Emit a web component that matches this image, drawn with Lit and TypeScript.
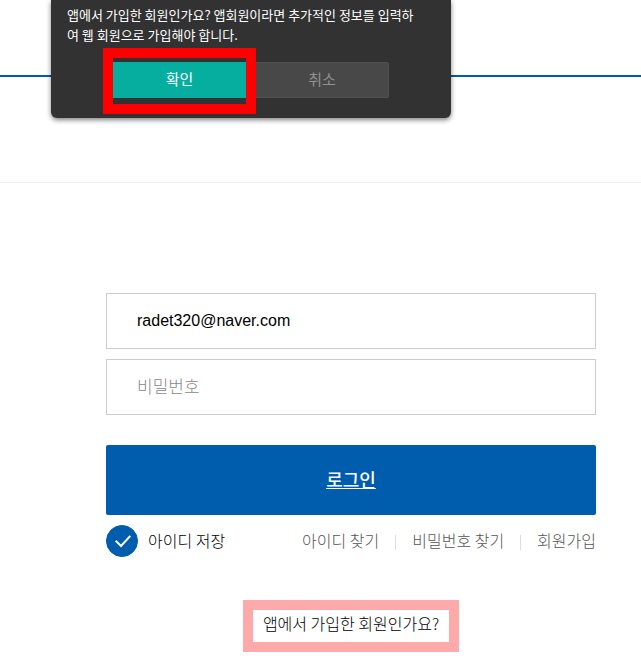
import { LitElement, html, css } from "lit";
import { customElement, state } from "lit/decorators.js";

@customElement("confirm-dialog")
class ConfirmDialog extends LitElement {
  static styles = css`
    :host {
      display: block;
      box-sizing: border-box;
      padding: 5px 16px 4px;
      border-radius: 0 0 6px 6px;
      background: #323232;
      color: #fff;
      box-shadow: 0 2px 5px rgba(0, 0, 0, 0.5);
    }
    .message {
      margin: 0;
      font-size: 13px;
      line-height: 20px;
    }
    .actions {
      display: flex;
      justify-content: center;
      align-items: center;
      margin-top: 3px;
      padding-right: 10px;
    }
    .highlight {
      border: 10px solid #f00;
      padding: 4px 0 6px;
    }
    button {
      display: block;
      box-sizing: border-box;
      width: 133px;
      height: 36px;
      padding: 0 0 2px;
      border: 0;
      font: inherit;
      font-size: 15px;
      line-height: 32px;
    }
    .ok {
      background: #05ae9e;
      color: #fff;
    }
    .cancel {
      margin-bottom: 2px;
      border: 1px solid #505050;
      border-left: 0;
      border-radius: 0 2px 2px 0;
      background: #484848;
      color: #919191;
    }
  `;

  render() {
    return html`
      <p class="message">
        앱에서 가입한 회원인가요? 앱회원이라면 추가적인 정보를 입력하<br />여 웹
        회원으로 가입해야 합니다.
      </p>
      <div class="actions">
        <div class="highlight"><button class="ok" type="button">확인</button></div>
        <button class="cancel" type="button">취소</button>
      </div>
    `;
  }
}

@customElement("app-root")
class AppRoot extends LitElement {
  static styles = css`
    :host {
      display: block;
      position: relative;
      background: #fff;
      color: #000;
      font-family: "Noto Sans CJK KR", sans-serif;
      font-size: 16px;
      line-height: 24px;
    }
    .header {
      height: 75px;
      border-bottom: 2px solid #005cac;
    }
    .title-band {
      height: 105px;
      border-bottom: 1px solid #eee;
    }
    .dialog {
      position: absolute;
      top: 0;
      left: 51px;
      width: 400px;
    }
    .login {
      display: flex;
      flex-direction: column;
      padding: 110px 45px 7px 106px;
    }
    .fields {
      display: grid;
      gap: 10px;
    }
    .field {
      box-sizing: border-box;
      width: 100%;
      height: 56px;
      margin: 0;
      padding: 0 30px;
      border: 1px solid #ccc;
      border-radius: 0;
      background: #fff;
      color: #000;
      font-family: "Liberation Sans", "Noto Sans CJK KR", sans-serif;
      font-size: 16px;
      outline: none;
    }
    .password {
      padding-bottom: 4px;
      font-family: "Noto Sans CJK KR", sans-serif;
      font-size: 17px;
      font-weight: 300;
    }
    .field::placeholder {
      color: #888;
      opacity: 1;
    }
    .submit {
      height: 70px;
      margin: 30px 0 10px;
      padding: 0 0 2px;
      border: 0;
      border-radius: 2px;
      background: #005cac;
      color: #fff;
      font: inherit;
      font-size: 18px;
      font-weight: 500;
      text-decoration: underline;
    }
    .options {
      display: flex;
      justify-content: space-between;
      align-items: center;
      font-weight: 300;
    }
    .remember {
      display: flex;
      align-items: center;
      gap: 10px;
    }
    .remember-text {
      padding-bottom: 3px;
    }
    .check {
      display: grid;
      width: 32px;
      height: 32px;
    }
    .check input,
    .check svg {
      grid-area: 1 / 1;
      width: 32px;
      height: 32px;
      margin: 0;
    }
    .check input {
      appearance: none;
      box-sizing: border-box;
      border: 1px solid #005cac;
      border-radius: 50%;
      background: #fff;
    }
    .check input:checked {
      background: #005cac;
    }
    .check svg {
      pointer-events: none;
    }
    .links {
      display: flex;
      align-items: center;
      gap: 16px;
      padding-bottom: 3px;
    }
    .divider {
      width: 1px;
      height: 15px;
      margin-top: 6px;
      background: #ddd;
    }
    a {
      color: #555;
      text-decoration: none;
      white-space: nowrap;
    }
    .app-member {
      align-self: center;
      margin-top: 43px;
      border: 10px solid #ffaaaa;
      padding: 1px 10px 7px;
      font-weight: 300;
    }
    .app-member a {
      color: #000;
    }
  `;

  @state() private remember = true;

  render() {
    return html`
      <header class="header"></header>
      <div class="title-band"></div>
      <form class="login" @submit=${(e: Event) => e.preventDefault()}>
        <div class="fields">
          <input class="field" type="text" aria-label="아이디" value="radet320@naver.com" />
          <input
            class="field password"
            type="password"
            aria-label="비밀번호"
            placeholder="비밀번호"
          />
        </div>
        <button class="submit" type="submit">로그인</button>
        <div class="options">
          <label class="remember">
            <span class="check">
              <input
                type="checkbox"
                .checked=${this.remember}
                @change=${(e: Event) =>
                  (this.remember = (e.target as HTMLInputElement).checked)}
              />
              <svg viewBox="0 0 32 32" aria-hidden="true">
                <path
                  d="M9.7 15.8 L15 21 L24.3 10.8"
                  fill="none"
                  stroke="#fff"
                  stroke-width="2"
                />
              </svg>
            </span>
            <span class="remember-text">아이디 저장</span>
          </label>
          <nav class="links">
            <a href="#find-id">아이디 찾기</a>
            <span class="divider"></span>
            <a href="#find-password">비밀번호 찾기</a>
            <span class="divider"></span>
            <a href="#join">회원가입</a>
          </nav>
        </div>
        <div class="app-member"><a href="#app-member">앱에서 가입한 회원인가요?</a></div>
      </form>
      <confirm-dialog class="dialog" role="dialog"></confirm-dialog>
    `;
  }
}
